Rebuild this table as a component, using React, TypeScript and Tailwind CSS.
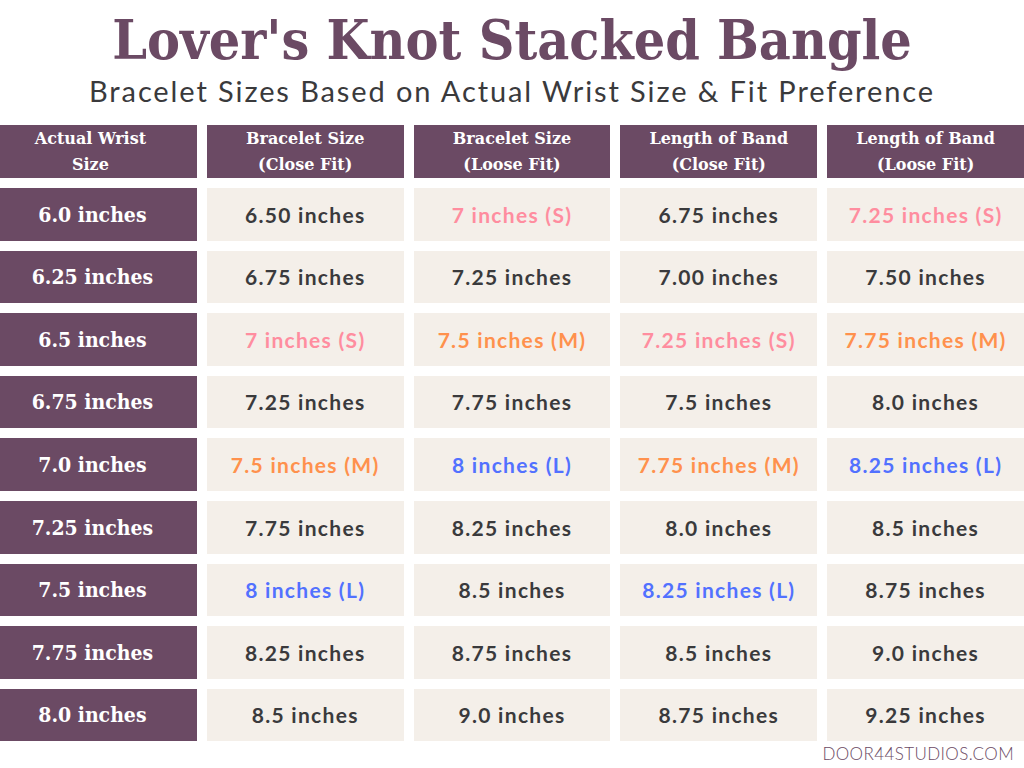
type Tone = "dark" | "pink" | "orange" | "blue";

type Cell = { text: string; tone?: Tone };

const headers = [
  ["Actual Wrist", "Size"],
  ["Bracelet Size", "(Close Fit)"],
  ["Bracelet Size", "(Loose Fit)"],
  ["Length of Band", "(Close Fit)"],
  ["Length of Band", "(Loose Fit)"],
];

const S: Tone = "pink";
const M: Tone = "orange";
const L: Tone = "blue";

const rows: { wrist: string; cells: Cell[] }[] = [
  {
    wrist: "6.0 inches",
    cells: [
      { text: "6.50 inches" },
      { text: "7 inches (S)", tone: S },
      { text: "6.75 inches" },
      { text: "7.25 inches (S)", tone: S },
    ],
  },
  {
    wrist: "6.25 inches",
    cells: [
      { text: "6.75 inches" },
      { text: "7.25 inches" },
      { text: "7.00 inches" },
      { text: "7.50 inches" },
    ],
  },
  {
    wrist: "6.5 inches",
    cells: [
      { text: "7 inches (S)", tone: S },
      { text: "7.5 inches (M)", tone: M },
      { text: "7.25 inches (S)", tone: S },
      { text: "7.75 inches (M)", tone: M },
    ],
  },
  {
    wrist: "6.75 inches",
    cells: [
      { text: "7.25 inches" },
      { text: "7.75 inches" },
      { text: "7.5 inches" },
      { text: "8.0 inches" },
    ],
  },
  {
    wrist: "7.0 inches",
    cells: [
      { text: "7.5 inches (M)", tone: M },
      { text: "8 inches (L)", tone: L },
      { text: "7.75 inches (M)", tone: M },
      { text: "8.25 inches (L)", tone: L },
    ],
  },
  {
    wrist: "7.25 inches",
    cells: [
      { text: "7.75 inches" },
      { text: "8.25 inches" },
      { text: "8.0 inches" },
      { text: "8.5 inches" },
    ],
  },
  {
    wrist: "7.5 inches",
    cells: [
      { text: "8 inches (L)", tone: L },
      { text: "8.5 inches" },
      { text: "8.25 inches (L)", tone: L },
      { text: "8.75 inches" },
    ],
  },
  {
    wrist: "7.75 inches",
    cells: [
      { text: "8.25 inches" },
      { text: "8.75 inches" },
      { text: "8.5 inches" },
      { text: "9.0 inches" },
    ],
  },
  {
    wrist: "8.0 inches",
    cells: [
      { text: "8.5 inches" },
      { text: "9.0 inches" },
      { text: "8.75 inches" },
      { text: "9.25 inches" },
    ],
  },
];

const toneClass: Record<Tone, string> = {
  dark: "text-[#3a3a3c]",
  pink: "text-[#ff8d9f]",
  orange: "text-[#ff914d]",
  blue: "text-[#5271ff]",
};

export default function App() {
  return (
    <div className="w-[1024px] h-[768px] bg-white flex flex-col overflow-hidden">
      <h1 className="mt-[8px] text-center font-['DejaVu_Serif_Condensed','DejaVu_Serif',serif] font-bold text-[55px] leading-[64px] text-[#6b4a64]">
        Lover's Knot Stacked Bangle
      </h1>
      <p className="mt-[1px] text-center font-['Lato',sans-serif] text-[29px] leading-[36px] tracking-[1.9px] text-[#3a3a3c]">
        Bracelet Sizes Based on Actual Wrist Size &amp; Fit Preference
      </p>

      <div className="mt-[16px] grid grid-cols-5 grid-rows-[53px_repeat(9,52.6px)] gap-[10px]">
        {headers.map(([a, b], i) => (
          <div
            key={a + b}
            className={`bg-[#6b4a64] flex flex-col items-center justify-center font-['DejaVu_Serif',serif] font-bold text-[16px] leading-[26px] text-white ${i === 0 ? "pr-[16px]" : ""}`}
          >
            <span>{a}</span>
            <span>{b}</span>
          </div>
        ))}

        {rows.map((row) => (
          <>
            <div
              key={row.wrist}
              className="bg-[#6b4a64] pr-[12px] flex items-center justify-center font-['DejaVu_Serif_Condensed','DejaVu_Serif',serif] font-bold text-[21px] text-white"
            >
              {row.wrist}
            </div>
            {row.cells.map((cell, i) => (
              <div
                key={row.wrist + i}
                className={`bg-[#f4efe9] flex items-center justify-center font-['Lato',sans-serif] font-bold text-[21px] tracking-[1.3px] ${toneClass[cell.tone ?? "dark"]}`}
              >
                {cell.text}
              </div>
            ))}
          </>
        ))}
      </div>

      <div className="mt-[3px] pr-[10px] text-right font-['Lato',sans-serif] font-light text-[17px] leading-[20px] tracking-[0.4px] text-[#6b4a64]">
        DOOR44STUDIOS.COM
      </div>
    </div>
  );
}
